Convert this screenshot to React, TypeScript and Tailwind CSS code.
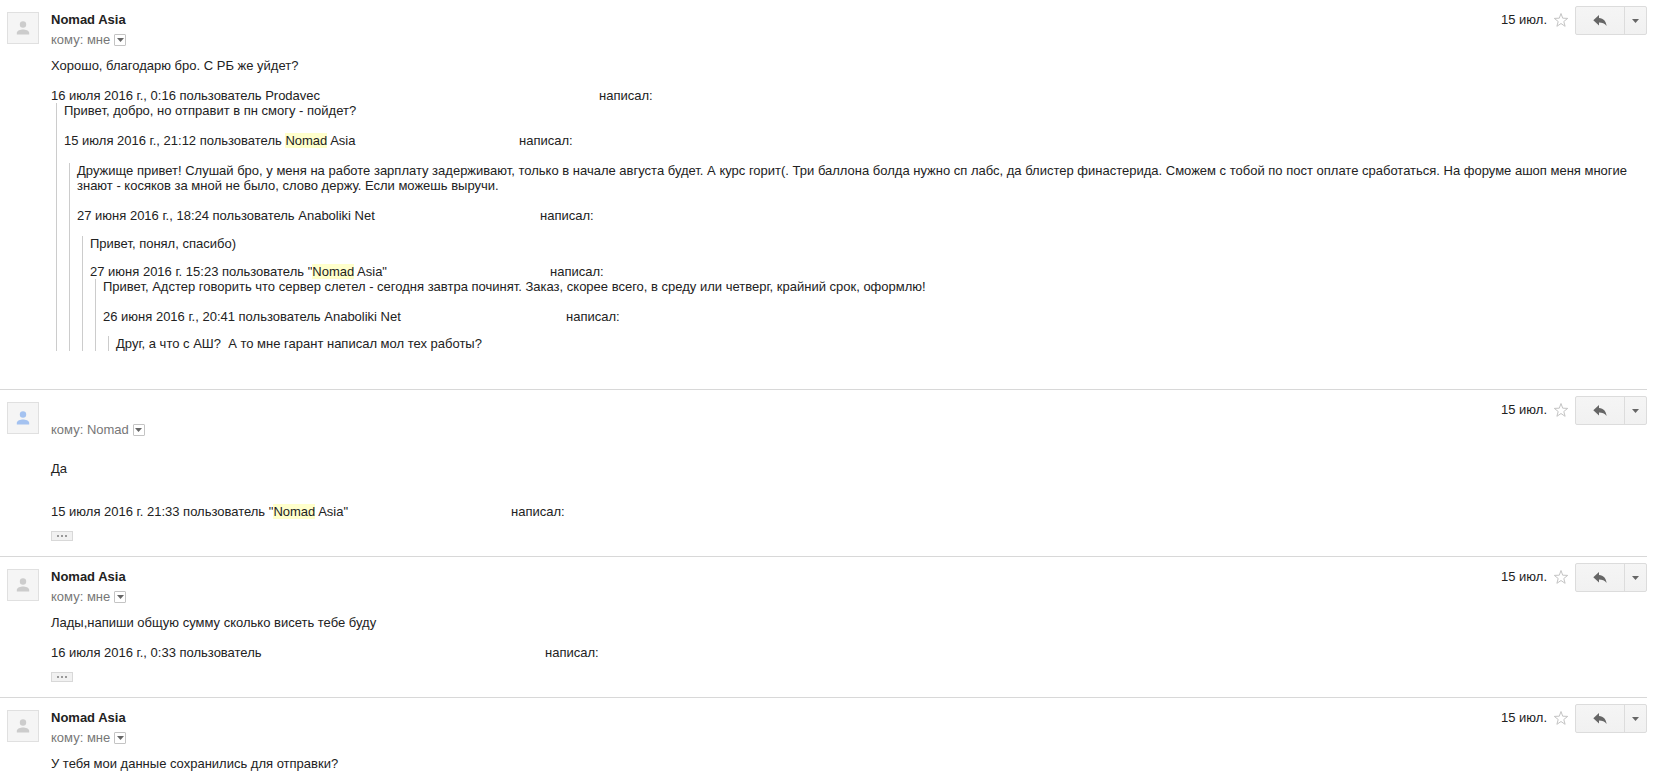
import React from "react";
import clsx from "clsx";

type AvatarProps = {
  isActive?: boolean;
};

const Avatar = ({ isActive }: AvatarProps) => (
  <div className="mt-3 flex h-8 w-8 shrink-0 items-center justify-center border border-[#e0e0e0] bg-[#f5f5f5]">
    <svg
      width="14"
      height="14"
      viewBox="0 0 14 14"
      className={clsx(isActive ? "fill-[#a4c2f0]" : "fill-[#cccccc]")}
      aria-hidden="true"
    >
      <circle cx="7" cy="3.5" r="3.2" />
      <path d="M.8 13.5v-1.6C.8 9.7 4.6 8.5 7 8.500s6.200 1.200 6.200 3.400v1.600z" />
    </svg>
  </div>
);

const Caret = () => (
  <svg width="7" height="4" viewBox="0 0 7 4" className="fill-[#666666]" aria-hidden="true">
    <path d="M0 0h7L3.5 4z" />
  </svg>
);

const MessageActions = () => (
  <div className="flex shrink-0 items-start">
    <time className="mt-3 mr-1.5">15 июл.</time>
    <button aria-label="Пометить" className="mt-3 mr-1.5">
      <svg width="16" height="16" viewBox="0 0 16 16" fill="none" stroke="#c4c4c4" aria-hidden="true">
        <path d="M8 1.500l1.700 4.700 5 .2-3.900 3.100 1.300 4.800L8 11.500l-4.100 2.800 1.300-4.800-3.900-3.100 5-.2z" />
      </svg>
    </button>
    <div className="mt-1.5 flex h-[29px] rounded-xs border border-[#dcdcdc] bg-linear-to-b from-[#f5f5f5] to-[#f1f1f1]">
      <button aria-label="Ответить" className="flex w-12 items-center justify-center">
        <svg width="14" height="12" viewBox="0 0 14 12" className="fill-[#666666]" aria-hidden="true">
          <path d="M6 0v3c4.600.4 7 3.200 7.600 8C11.600 8.200 9.300 7.400 6 7.400v3.200L.3 5.300z" />
        </svg>
      </button>
      <button
        aria-label="Ещё"
        className="flex w-[22px] items-center justify-center border-l border-[#dcdcdc]"
      >
        <Caret />
      </button>
    </div>
  </div>
);

type MessageProps = {
  sender?: string;
  recipient: string;
  isActive?: boolean;
  className?: string;
  children: React.ReactNode;
};

const Message = ({ sender, recipient, isActive, className, children }: MessageProps) => (
  <article className={clsx("flex pl-[7px]", className)}>
    <Avatar isActive={isActive} />
    <div className="ml-3 min-w-0 flex-auto">
      <header className="flex h-[58px] justify-between">
        <div className="pt-3">
          <h3 className="mb-[5px] h-[15px] font-bold">{sender}</h3>
          <div className="flex items-center text-[#777777]">
            <span>кому: {recipient}</span>
            <button
              aria-label="Показать детали"
              className="ml-1 flex h-3 w-3 items-center justify-center rounded-[1px] border border-[#c4c4c4]"
            >
              <Caret />
            </button>
          </div>
        </div>
        <MessageActions />
      </header>
      {children}
    </div>
  </article>
);

type QuoteProps = {
  children: React.ReactNode;
};

const Quote = ({ children }: QuoteProps) => (
  <blockquote className="ml-[5px] border-l border-[#cccccc] pl-[7px]">{children}</blockquote>
);

type WroteLineProps = {
  width: string;
  className?: string;
  children: React.ReactNode;
};

// The address between the name and "написал:" is left blank
const WroteLine = ({ width, className, children }: WroteLineProps) => (
  <p className={clsx("flex whitespace-nowrap", className)}>
    <span className={clsx("shrink-0", width)}>{children}</span>
    <span>написал:</span>
  </p>
);

const Highlight = () => <mark className="bg-[#ffffcc] text-inherit">Nomad</mark>;

const ShowTrimmedButton = () => (
  <button
    aria-label="Показать скрытый текст"
    className="mt-3 mb-[15px] flex h-2.5 w-[22px] items-center justify-center gap-0.5 border border-[#d8d8d8] bg-[#f1f1f1]"
  >
    <span className="h-0.5 w-0.5 bg-[#999999]" />
    <span className="h-0.5 w-0.5 bg-[#999999]" />
    <span className="h-0.5 w-0.5 bg-[#999999]" />
  </button>
);

const App = () => {
  return (
    <main className="mr-[19px] divide-y divide-[#d8d8d8] bg-white font-['Liberation_Sans',Arial,sans-serif] text-[13px] leading-[15px] text-[#222222]">
      <Message sender="Nomad Asia" recipient="мне" className="pb-[38px]">
        <p>Хорошо, благодарю бро. С РБ же уйдет?</p>
        <WroteLine width="w-[548px]" className="mt-[15px]">
          16 июля 2016 г., 0:16 пользователь Prodavec
        </WroteLine>
        <Quote>
          <p>Привет, добро, но отправит в пн смогу - пойдет?</p>
          <WroteLine width="w-[455px]" className="my-[15px]">
            15 июля 2016 г., 21:12 пользователь <Highlight /> Asia
          </WroteLine>
          <Quote>
            <p>
              Дружище привет! Слушай бро, у меня на работе зарплату задерживают, только в начале
              августа будет. А курс горит(. Три баллона болда нужно сп лабс, да блистер финастерида.
              Сможем с тобой по пост оплате сработаться. На форуме ашоп меня многие знают - косяков
              за мной не было, слово держу. Если можешь выручи.
            </p>
            <WroteLine width="w-[463px]" className="mt-[15px] mb-[13px]">
              27 июня 2016 г., 18:24 пользователь Anaboliki Net
            </WroteLine>
            <Quote>
              <p>Привет, понял, спасибо)</p>
              <WroteLine width="w-[460px]" className="mt-[13px]">
                27 июня 2016 г. 15:23 пользователь "<Highlight /> Asia"
              </WroteLine>
              <Quote>
                <p>
                  Привет, Адстер говорить что сервер слетел - сегодня завтра починят. Заказ, скорее
                  всего, в среду или четверг, крайний срок, оформлю!
                </p>
                <WroteLine width="w-[463px]" className="mt-[15px] mb-3">
                  26 июня 2016 г., 20:41 пользователь Anaboliki Net
                </WroteLine>
                <Quote>
                  <p>Друг, а что с АШ?&nbsp; А то мне гарант написал мол тех работы?</p>
                </Quote>
              </Quote>
            </Quote>
          </Quote>
        </Quote>
      </Message>

      <Message recipient="Nomad" isActive>
        <p className="mt-[13px] mb-7">Да</p>
        <WroteLine width="w-[460px]">
          15 июля 2016 г. 21:33 пользователь "<Highlight /> Asia"
        </WroteLine>
        <ShowTrimmedButton />
      </Message>

      <Message sender="Nomad Asia" recipient="мне">
        <p>Лады,напиши общую сумму сколько висеть тебе буду</p>
        <WroteLine width="w-[494px]" className="mt-[15px]">
          16 июля 2016 г., 0:33 пользователь
        </WroteLine>
        <ShowTrimmedButton />
      </Message>

      <Message sender="Nomad Asia" recipient="мне">
        <p>У тебя мои данные сохранились для отправки?</p>
      </Message>
    </main>
  );
};

export default App;
